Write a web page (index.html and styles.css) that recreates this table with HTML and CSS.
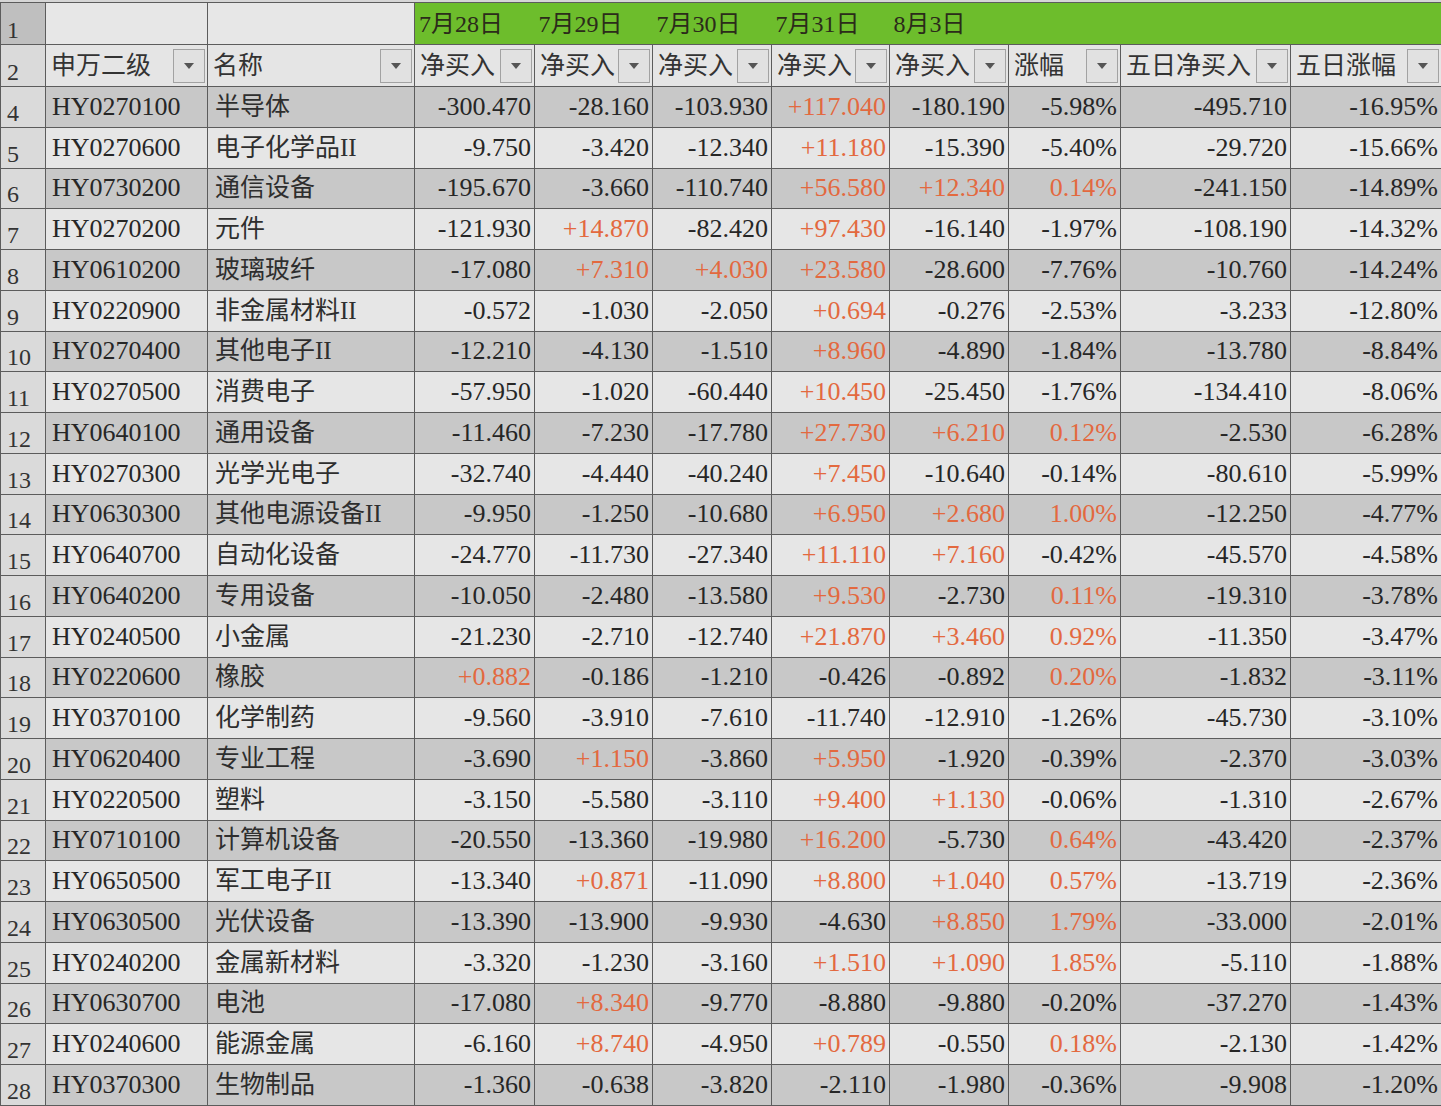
FILE: index.html
```html
<!DOCTYPE html>
<html lang="zh-CN">
<head>
<meta charset="utf-8">
<title>申万二级 净买入</title>
<link rel="stylesheet" href="styles.css">
</head>
<body>
<div class="top"></div>
<table class="sheet">
<colgroup>
<col class="c0"><col class="c1"><col class="c2"><col class="c3"><col class="c4"><col class="c5"><col class="c6"><col class="c7"><col class="c8"><col class="c9"><col class="c10">
</colgroup>
<tbody>
<tr class="r1">
<td class="rn rn1">1</td><td class="blank"></td><td class="blank"></td>
<td class="g g1">7月28日</td><td class="g">7月29日</td><td class="g">7月30日</td><td class="g">7月31日</td><td class="g">8月3日</td><td class="g"></td><td class="g"></td><td class="g"></td>
</tr>
<tr class="r2">
<td class="rn">2</td>
<td class="hc"><div class="hd"><span>申万二级</span><span class="fb"></span></div></td>
<td class="hc"><div class="hd"><span>名称</span><span class="fb"></span></div></td>
<td class="hc"><div class="hd"><span>净买入</span><span class="fb"></span></div></td>
<td class="hc"><div class="hd"><span>净买入</span><span class="fb"></span></div></td>
<td class="hc"><div class="hd"><span>净买入</span><span class="fb"></span></div></td>
<td class="hc"><div class="hd"><span>净买入</span><span class="fb"></span></div></td>
<td class="hc"><div class="hd"><span>净买入</span><span class="fb"></span></div></td>
<td class="hc"><div class="hd"><span>涨幅</span><span class="fb"></span></div></td>
<td class="hc"><div class="hd"><span>五日净买入</span><span class="fb"></span></div></td>
<td class="hc"><div class="hd"><span>五日涨幅</span><span class="fb"></span></div></td>
</tr>
<tr class="d"><td class="rn">4</td><td>HY0270100</td><td class="nm">半导体</td><td class="n">-300.470</td><td class="n">-28.160</td><td class="n">-103.930</td><td class="n p">+117.040</td><td class="n">-180.190</td><td class="n">-5.98%</td><td class="n">-495.710</td><td class="n">-16.95%</td></tr>
<tr class="l"><td class="rn">5</td><td>HY0270600</td><td class="nm">电子化学品II</td><td class="n">-9.750</td><td class="n">-3.420</td><td class="n">-12.340</td><td class="n p">+11.180</td><td class="n">-15.390</td><td class="n">-5.40%</td><td class="n">-29.720</td><td class="n">-15.66%</td></tr>
<tr class="d"><td class="rn">6</td><td>HY0730200</td><td class="nm">通信设备</td><td class="n">-195.670</td><td class="n">-3.660</td><td class="n">-110.740</td><td class="n p">+56.580</td><td class="n p">+12.340</td><td class="n p">0.14%</td><td class="n">-241.150</td><td class="n">-14.89%</td></tr>
<tr class="l"><td class="rn">7</td><td>HY0270200</td><td class="nm">元件</td><td class="n">-121.930</td><td class="n p">+14.870</td><td class="n">-82.420</td><td class="n p">+97.430</td><td class="n">-16.140</td><td class="n">-1.97%</td><td class="n">-108.190</td><td class="n">-14.32%</td></tr>
<tr class="d"><td class="rn">8</td><td>HY0610200</td><td class="nm">玻璃玻纤</td><td class="n">-17.080</td><td class="n p">+7.310</td><td class="n p">+4.030</td><td class="n p">+23.580</td><td class="n">-28.600</td><td class="n">-7.76%</td><td class="n">-10.760</td><td class="n">-14.24%</td></tr>
<tr class="l"><td class="rn">9</td><td>HY0220900</td><td class="nm">非金属材料II</td><td class="n">-0.572</td><td class="n">-1.030</td><td class="n">-2.050</td><td class="n p">+0.694</td><td class="n">-0.276</td><td class="n">-2.53%</td><td class="n">-3.233</td><td class="n">-12.80%</td></tr>
<tr class="d"><td class="rn">10</td><td>HY0270400</td><td class="nm">其他电子II</td><td class="n">-12.210</td><td class="n">-4.130</td><td class="n">-1.510</td><td class="n p">+8.960</td><td class="n">-4.890</td><td class="n">-1.84%</td><td class="n">-13.780</td><td class="n">-8.84%</td></tr>
<tr class="l"><td class="rn">11</td><td>HY0270500</td><td class="nm">消费电子</td><td class="n">-57.950</td><td class="n">-1.020</td><td class="n">-60.440</td><td class="n p">+10.450</td><td class="n">-25.450</td><td class="n">-1.76%</td><td class="n">-134.410</td><td class="n">-8.06%</td></tr>
<tr class="d"><td class="rn">12</td><td>HY0640100</td><td class="nm">通用设备</td><td class="n">-11.460</td><td class="n">-7.230</td><td class="n">-17.780</td><td class="n p">+27.730</td><td class="n p">+6.210</td><td class="n p">0.12%</td><td class="n">-2.530</td><td class="n">-6.28%</td></tr>
<tr class="l"><td class="rn">13</td><td>HY0270300</td><td class="nm">光学光电子</td><td class="n">-32.740</td><td class="n">-4.440</td><td class="n">-40.240</td><td class="n p">+7.450</td><td class="n">-10.640</td><td class="n">-0.14%</td><td class="n">-80.610</td><td class="n">-5.99%</td></tr>
<tr class="d"><td class="rn">14</td><td>HY0630300</td><td class="nm">其他电源设备II</td><td class="n">-9.950</td><td class="n">-1.250</td><td class="n">-10.680</td><td class="n p">+6.950</td><td class="n p">+2.680</td><td class="n p">1.00%</td><td class="n">-12.250</td><td class="n">-4.77%</td></tr>
<tr class="l"><td class="rn">15</td><td>HY0640700</td><td class="nm">自动化设备</td><td class="n">-24.770</td><td class="n">-11.730</td><td class="n">-27.340</td><td class="n p">+11.110</td><td class="n p">+7.160</td><td class="n">-0.42%</td><td class="n">-45.570</td><td class="n">-4.58%</td></tr>
<tr class="d"><td class="rn">16</td><td>HY0640200</td><td class="nm">专用设备</td><td class="n">-10.050</td><td class="n">-2.480</td><td class="n">-13.580</td><td class="n p">+9.530</td><td class="n">-2.730</td><td class="n p">0.11%</td><td class="n">-19.310</td><td class="n">-3.78%</td></tr>
<tr class="l"><td class="rn">17</td><td>HY0240500</td><td class="nm">小金属</td><td class="n">-21.230</td><td class="n">-2.710</td><td class="n">-12.740</td><td class="n p">+21.870</td><td class="n p">+3.460</td><td class="n p">0.92%</td><td class="n">-11.350</td><td class="n">-3.47%</td></tr>
<tr class="d"><td class="rn">18</td><td>HY0220600</td><td class="nm">橡胶</td><td class="n p">+0.882</td><td class="n">-0.186</td><td class="n">-1.210</td><td class="n">-0.426</td><td class="n">-0.892</td><td class="n p">0.20%</td><td class="n">-1.832</td><td class="n">-3.11%</td></tr>
<tr class="l"><td class="rn">19</td><td>HY0370100</td><td class="nm">化学制药</td><td class="n">-9.560</td><td class="n">-3.910</td><td class="n">-7.610</td><td class="n">-11.740</td><td class="n">-12.910</td><td class="n">-1.26%</td><td class="n">-45.730</td><td class="n">-3.10%</td></tr>
<tr class="d"><td class="rn">20</td><td>HY0620400</td><td class="nm">专业工程</td><td class="n">-3.690</td><td class="n p">+1.150</td><td class="n">-3.860</td><td class="n p">+5.950</td><td class="n">-1.920</td><td class="n">-0.39%</td><td class="n">-2.370</td><td class="n">-3.03%</td></tr>
<tr class="l"><td class="rn">21</td><td>HY0220500</td><td class="nm">塑料</td><td class="n">-3.150</td><td class="n">-5.580</td><td class="n">-3.110</td><td class="n p">+9.400</td><td class="n p">+1.130</td><td class="n">-0.06%</td><td class="n">-1.310</td><td class="n">-2.67%</td></tr>
<tr class="d"><td class="rn">22</td><td>HY0710100</td><td class="nm">计算机设备</td><td class="n">-20.550</td><td class="n">-13.360</td><td class="n">-19.980</td><td class="n p">+16.200</td><td class="n">-5.730</td><td class="n p">0.64%</td><td class="n">-43.420</td><td class="n">-2.37%</td></tr>
<tr class="l"><td class="rn">23</td><td>HY0650500</td><td class="nm">军工电子II</td><td class="n">-13.340</td><td class="n p">+0.871</td><td class="n">-11.090</td><td class="n p">+8.800</td><td class="n p">+1.040</td><td class="n p">0.57%</td><td class="n">-13.719</td><td class="n">-2.36%</td></tr>
<tr class="d"><td class="rn">24</td><td>HY0630500</td><td class="nm">光伏设备</td><td class="n">-13.390</td><td class="n">-13.900</td><td class="n">-9.930</td><td class="n">-4.630</td><td class="n p">+8.850</td><td class="n p">1.79%</td><td class="n">-33.000</td><td class="n">-2.01%</td></tr>
<tr class="l"><td class="rn">25</td><td>HY0240200</td><td class="nm">金属新材料</td><td class="n">-3.320</td><td class="n">-1.230</td><td class="n">-3.160</td><td class="n p">+1.510</td><td class="n p">+1.090</td><td class="n p">1.85%</td><td class="n">-5.110</td><td class="n">-1.88%</td></tr>
<tr class="d"><td class="rn">26</td><td>HY0630700</td><td class="nm">电池</td><td class="n">-17.080</td><td class="n p">+8.340</td><td class="n">-9.770</td><td class="n">-8.880</td><td class="n">-9.880</td><td class="n">-0.20%</td><td class="n">-37.270</td><td class="n">-1.43%</td></tr>
<tr class="l"><td class="rn">27</td><td>HY0240600</td><td class="nm">能源金属</td><td class="n">-6.160</td><td class="n p">+8.740</td><td class="n">-4.950</td><td class="n p">+0.789</td><td class="n">-0.550</td><td class="n p">0.18%</td><td class="n">-2.130</td><td class="n">-1.42%</td></tr>
<tr class="d"><td class="rn">28</td><td>HY0370300</td><td class="nm">生物制品</td><td class="n">-1.360</td><td class="n">-0.638</td><td class="n">-3.820</td><td class="n">-2.110</td><td class="n">-1.980</td><td class="n">-0.36%</td><td class="n">-9.908</td><td class="n">-1.20%</td></tr>
</tbody>
</table>
</body>
</html>
```
FILE: styles.css
```css
html, body {
  margin: 0;
  padding: 0;
}
body {
  width: 1441px;
  height: 1106px;
  overflow: hidden;
  background: #e4e4e4;
  font-family: "Liberation Serif", "Noto Sans CJK SC", serif;
  color: #262626;
}
.top {
  height: 2px;
  background: #d6d6d6;
}
.sheet {
  border-collapse: collapse;
  table-layout: fixed;
  width: 1441px;
}
.c0 { width: 45px; }
.c1 { width: 162px; }
.c2 { width: 207px; }
.c3 { width: 120px; }
.c4 { width: 118px; }
.c5 { width: 119px; }
.c6 { width: 118px; }
.c7 { width: 119px; }
.c8 { width: 112px; }
.c9 { width: 170px; }
.c10 { width: 151px; }

.sheet td {
  border: 1px solid #5c5c5c;
  height: 39.75px;
  padding: 0 4px 0 6px;
  font-size: 26px;
  line-height: 30px;
  white-space: nowrap;
  overflow: hidden;
  vertical-align: middle;
}
.sheet .nm {
  font-size: 25px;
  color: #2e2e2e;
  padding-left: 7px;
}
.sheet .n {
  text-align: right;
  padding-right: 3px;
}
.sheet .p {
  color: #e3693f;
}
tr.d td { background: #c8c8c8; }
tr.l td { background: #e6e6e6; }

.sheet td.rn {
  background: #dadada;
  font-size: 24px;
  padding: 0 0 0 6px;
  vertical-align: bottom;
  line-height: 27px;
  color: #333;
}
.sheet td.rn1 {
  background: #bfbfbf;
}

.r1 td {
  height: 41px;
}
.r1 td.blank {
  background: #e7e7e7;
}
.r1 td.g {
  background: #6dbd2c;
  font-size: 24px;
  padding-left: 4px;
  color: #2b2b1a;
  vertical-align: middle;
  border-left-style: hidden;
}
.r1 td.g1 {
  border-left: 1px solid #5c5c5c;
}

.r2 td {
  height: 41px;
  background: #e5e5e5;
}
.r2 td.hc {
  padding: 0 2px 0 5px;
  font-size: 25px;
  color: #333;
}
.hd {
  display: flex;
  align-items: center;
  justify-content: space-between;
}
.fb {
  flex: none;
  width: 32px;
  height: 34px;
  box-sizing: border-box;
  border: 1px solid #a2a2a2;
  background: #e1e1e1;
  display: flex;
  align-items: center;
  justify-content: center;
}
.fb::after {
  content: "";
  width: 0;
  height: 0;
  border-left: 5px solid transparent;
  border-right: 5px solid transparent;
  border-top: 6px solid #555;
}
```
